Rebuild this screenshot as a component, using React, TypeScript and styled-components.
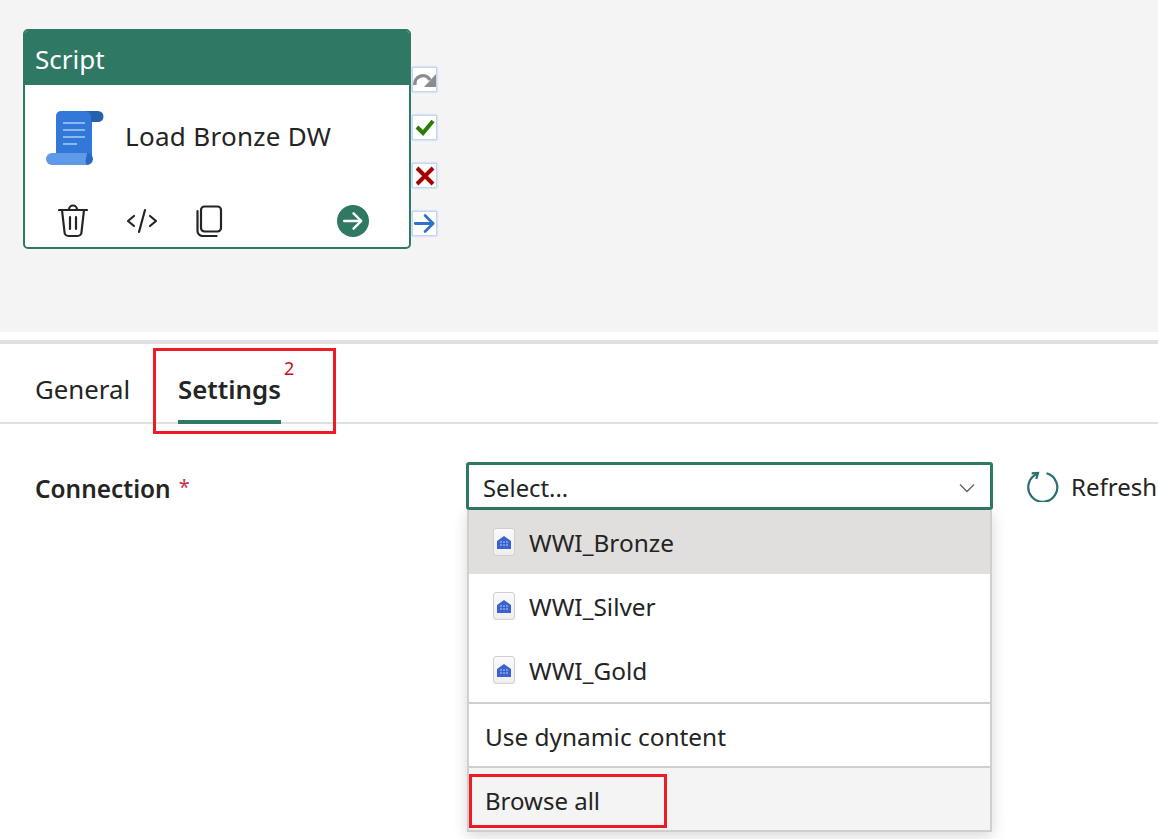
import React from 'react';
import styled, { createGlobalStyle } from 'styled-components';

const GREEN = '#2f7864';
const RED = '#ed1c24';
const INK = '#242424';

const GlobalStyle = createGlobalStyle`
  html, body {
    margin: 0;
    padding: 0;
    background: #fff;
    overflow: hidden;
  }
  body {
    font-family: "Noto Sans", "Open Sans", "Liberation Sans", sans-serif;
    color: ${INK};
  }
`;

const Page = styled.div`
  width: 1158px;
  height: 839px;
  overflow: hidden;
  display: flex;
  flex-direction: column;
`;

const Canvas = styled.div`
  height: 332px;
  box-sizing: border-box;
  padding: 29px 0 0 23px;
  background: #f4f4f4;
  display: flex;
  align-items: flex-start;
  flex-shrink: 0;
`;

const Card = styled.div`
  width: 388px;
  height: 220px;
  box-sizing: border-box;
  border: 2px solid ${GREEN};
  border-radius: 5px;
  background: #fff;
  display: flex;
  flex-direction: column;
  overflow: hidden;
`;

const CardHeader = styled.div`
  height: 55px;
  margin-top: -1px;
  flex-shrink: 0;
  box-sizing: border-box;
  padding-left: 10px;
  background: ${GREEN};
  border-top: 1px solid #6fa595;
  color: #fff;
  font-size: 26px;
  line-height: 56px;
`;

const CardBody = styled.div`
  height: 104px;
  flex-shrink: 0;
  box-sizing: border-box;
  padding: 0 0 0 21px;
  display: flex;
  align-items: center;
  gap: 21px;
`;

const CardName = styled.span`
  font-size: 26px;
  letter-spacing: 0.3px;
  margin-top: -3px;
`;

const CardActions = styled.div`
  display: flex;
  align-items: center;
  height: 44px;
  margin-top: 10px;
  padding-left: 33px;
`;

const ActionSlot = styled.span<{ $w: number }>`
  width: ${(p) => p.$w}px;
  display: flex;
  align-items: center;
`;

const GoButton = styled.span`
  width: 32px;
  height: 32px;
  margin-left: 112px;
  border-radius: 50%;
  background: ${GREEN};
  display: flex;
  align-items: center;
  justify-content: center;
`;

const SideButtons = styled.div`
  margin: 38px 0 0 1px;
  display: flex;
  flex-direction: column;
  gap: 23px;
`;

const SideButton = styled.div`
  width: 25px;
  height: 25px;
  box-sizing: border-box;
  background: #fff;
  border: 1px solid #c4d6f2;
  box-shadow: 0 0 2px #a9c4f0;
  display: flex;
  align-items: center;
  justify-content: center;
`;

const Panel = styled.div`
  flex: 1;
  margin-top: 8px;
  border-top: 4px solid #e1e1e1;
`;

const TabBar = styled.div`
  position: relative;
  height: 80px;
  box-sizing: border-box;
  padding-left: 35px;
  border-bottom: 2px solid #e0e0e0;
  display: flex;
  gap: 48px;
`;

const Tab = styled.div<{ $active?: boolean }>`
  position: relative;
  height: 80px;
  box-sizing: border-box;
  padding-top: 27px;
  font-size: 25.800px;
  line-height: 36px;
  font-weight: ${(p) => (p.$active ? 600 : 400)};
  border-bottom: 4px solid ${(p) => (p.$active ? GREEN : 'transparent')};
`;

const TabBadge = styled.span`
  position: absolute;
  left: 106px;
  top: 12px;
  color: #c50f1f;
  font-size: 18px;
  line-height: 24px;
  font-weight: 400;
`;

const TabHighlight = styled.div`
  position: absolute;
  left: 153px;
  top: 4px;
  width: 183px;
  height: 86px;
  box-sizing: border-box;
  border: 3px solid ${RED};
`;

const FormRow = styled.div`
  display: flex;
  align-items: flex-start;
  padding: 38px 0 0 35px;
`;

const FieldLabel = styled.div`
  width: 431px;
  flex-shrink: 0;
  font-size: 24.400px;
  font-weight: 600;
  line-height: 54px;
`;

const Required = styled.span`
  color: #c4314b;
  font-weight: 400;
  font-size: 20px;
  margin-left: 8px;
  position: relative;
  top: -4px;
`;

const Field = styled.div`
  position: relative;
  width: 527px;
  flex-shrink: 0;
`;

const SelectBox = styled.div`
  height: 48px;
  box-sizing: border-box;
  padding: 4px 15px 0 14px;
  border: 3px solid ${GREEN};
  border-radius: 3px;
  background: #fff;
  display: flex;
  align-items: center;
  justify-content: space-between;
  font-size: 23.800px;
`;

const Menu = styled.div`
  position: absolute;
  left: 1px;
  top: 48px;
  width: 525px;
  box-sizing: border-box;
  background: #fff;
  border: 2px solid #cfcfcf;
  border-top: 0;
  box-shadow: 0 4px 14px rgba(0, 0, 0, 0.16);
`;

const MenuItem = styled.div<{ $selected?: boolean }>`
  height: 64px;
  box-sizing: border-box;
  padding-left: 24px;
  display: flex;
  align-items: center;
  gap: 14px;
  font-size: 24.400px;
  background: ${(p) => (p.$selected ? '#e0dfdd' : '#fff')};
`;

const MenuAction = styled.div<{ $muted?: boolean }>`
  position: relative;
  height: 64px;
  box-sizing: border-box;
  padding: 2px 0 0 16px;
  border-top: 2px solid #cfcfcf;
  display: flex;
  align-items: center;
  font-size: ${(p) => (p.$muted ? 24 : 24.4)}px;
  background: ${(p) => (p.$muted ? '#f4f4f4' : '#fff')};
`;

const BrowseHighlight = styled.div`
  position: absolute;
  left: 0;
  top: 6px;
  width: 198px;
  height: 54px;
  box-sizing: border-box;
  border: 3px solid ${RED};
`;

const DbTile = styled.span`
  width: 22px;
  height: 28px;
  box-sizing: border-box;
  border: 1px solid #d2d0ce;
  border-radius: 3px;
  background: linear-gradient(#fafafa, #eeeeee);
  display: flex;
  align-items: center;
  justify-content: center;
`;

const RefreshButton = styled.div`
  display: flex;
  align-items: center;
  gap: 12px;
  margin-left: 34px;
  height: 48px;
  font-size: 24px;
  white-space: nowrap;
`;

const ScriptIcon = () => (
  <svg width="58" height="54" viewBox="0 0 58 54" style={{ flexShrink: 0, marginTop: 2 }}>
    <path d="M10 5a5 5 0 0 1 5-5h31v46H10z" fill="#3278d9" />
    <path d="M39 0h13a5.500 5.500 0 0 1 0 11h-7V6a6 6 0 0 0-6-6z" fill="#2560ab" />
    <path d="M6 42h35v12H6a6 6 0 0 1 0-12z" fill="#5f9ae8" />
    <path d="M41 42a6 6 0 0 1 6 6a6 6 0 0 1-6 6a6 6 0 0 1-1-6z" fill="#2a69c2" />
    <path d="M17 12h22M17 19h22M17 26h22M17 33h14" stroke="#8db7f0" strokeWidth="2" />
  </svg>
);

const TrashIcon = () => (
  <svg width="30" height="34" viewBox="0 0 30 34" fill="none" stroke="#242424" strokeWidth="2.200" strokeLinecap="round">
    <path d="M1 6h28" />
    <path d="M11 5.500a4 4 0 0 1 8 0" />
    <path d="M4 6l2.500 22a4 4 0 0 0 4 4h9a4 4 0 0 0 4-4L26 6" />
    <path d="M12 13v12M18 13v12" />
  </svg>
);

const CodeIcon = () => (
  <svg width="32" height="28" viewBox="0 0 32 28" fill="none" stroke="#242424" strokeWidth="2.200" strokeLinecap="round" strokeLinejoin="round">
    <path d="M8 9l-6 5 6 5" />
    <path d="M24 9l6 5-6 5" />
    <path d="M19 3l-6 22" />
  </svg>
);

const CopyIcon = () => (
  <svg width="28" height="32" viewBox="0 0 28 32" fill="none" stroke="#242424" strokeWidth="2.200">
    <rect x="6" y="1.500" width="20" height="25" rx="3.500" />
    <path d="M2.500 6v20a5 5 0 0 0 5 5h14" strokeLinecap="round" />
  </svg>
);

const ArrowRight = ({ color, size, width }: { color: string; size: number; width: number }) => (
  <svg width={size} height={size} viewBox="0 0 20 20" fill="none" stroke={color} strokeWidth={width} strokeLinecap="round" strokeLinejoin="round">
    <path d="M2 10h15" />
    <path d="M10.500 3l7 7-7 7" />
  </svg>
);

const RedoIcon = () => (
  <svg width="23" height="19" viewBox="0 0 23 19">
    <path d="M2 15a8 8 0 0 1 15-5" fill="none" stroke="#8c8c8c" strokeWidth="3.500" />
    <path d="M23 4v13H11z" fill="#8c8c8c" />
  </svg>
);

const CheckIcon = () => (
  <svg width="20" height="17" viewBox="0 0 20 17">
    <path d="M2 8l6 6L18 2" fill="none" stroke="#2a7d00" strokeWidth="4" />
  </svg>
);

const CrossIcon = () => (
  <svg width="20" height="20" viewBox="0 0 20 20">
    <path d="M2 2l16 16M18 2L2 18" stroke="#a80000" strokeWidth="4" />
  </svg>
);

const ChevronIcon = () => (
  <svg width="16" height="10" viewBox="0 0 16 10" fill="none" stroke="#616161" strokeWidth="1.300">
    <path d="M1 1.500l7 7 7-7" />
  </svg>
);

const RefreshIcon = () => (
  <svg width="32" height="32" viewBox="0 0 32 32" fill="none" stroke="#2a6f73" strokeWidth="2.200">
    <path d="M19.500 3.300A14.500 14.500 0 1 1 10.500 3.800" />
    <path d="M4.700 3.300L11 3l-1.700 6" />
  </svg>
);

const DbIcon = () => (
  <DbTile>
    <svg width="14" height="13" viewBox="0 0 14 13">
      <path d="M0 5l7-5 7 5v8H0z" fill="#3a62d0" />
      <path d="M3 6h2M6 6h2M9 6h2M3 9h2M6 9h2M9 9h2" stroke="#b9c9f2" strokeWidth="1.200" />
    </svg>
  </DbTile>
);

const connections = ['WWI_Bronze', 'WWI_Silver', 'WWI_Gold'];

const App: React.FC = () => (
  <Page>
    <GlobalStyle />
    <Canvas>
      <Card>
        <CardHeader>Script</CardHeader>
        <CardBody>
          <ScriptIcon />
          <CardName>Load Bronze DW</CardName>
        </CardBody>
        <CardActions>
          <ActionSlot $w={68}><TrashIcon /></ActionSlot>
          <ActionSlot $w={69}><CodeIcon /></ActionSlot>
          <ActionSlot $w={30}><CopyIcon /></ActionSlot>
          <GoButton><ArrowRight color="#fff" size={22} width={2.2} /></GoButton>
        </CardActions>
      </Card>
      <SideButtons>
        <SideButton><RedoIcon /></SideButton>
        <SideButton><CheckIcon /></SideButton>
        <SideButton><CrossIcon /></SideButton>
        <SideButton><ArrowRight color="#2f72c8" size={23} width={2.4} /></SideButton>
      </SideButtons>
    </Canvas>
    <Panel>
      <TabBar>
        <Tab>General</Tab>
        <Tab $active>
          Settings
          <TabBadge>2</TabBadge>
        </Tab>
        <TabHighlight />
      </TabBar>
      <FormRow>
        <FieldLabel>
          Connection<Required>*</Required>
        </FieldLabel>
        <Field>
          <SelectBox>
            Select...
            <ChevronIcon />
          </SelectBox>
          <Menu>
            {connections.map((name, i) => (
              <MenuItem key={name} $selected={i === 0}>
                <DbIcon />
                {name}
              </MenuItem>
            ))}
            <MenuAction>Use dynamic content</MenuAction>
            <MenuAction $muted>
              Browse all
              <BrowseHighlight />
            </MenuAction>
          </Menu>
        </Field>
        <RefreshButton>
          <RefreshIcon />
          Refresh
        </RefreshButton>
      </FormRow>
    </Panel>
  </Page>
);

export default App;
